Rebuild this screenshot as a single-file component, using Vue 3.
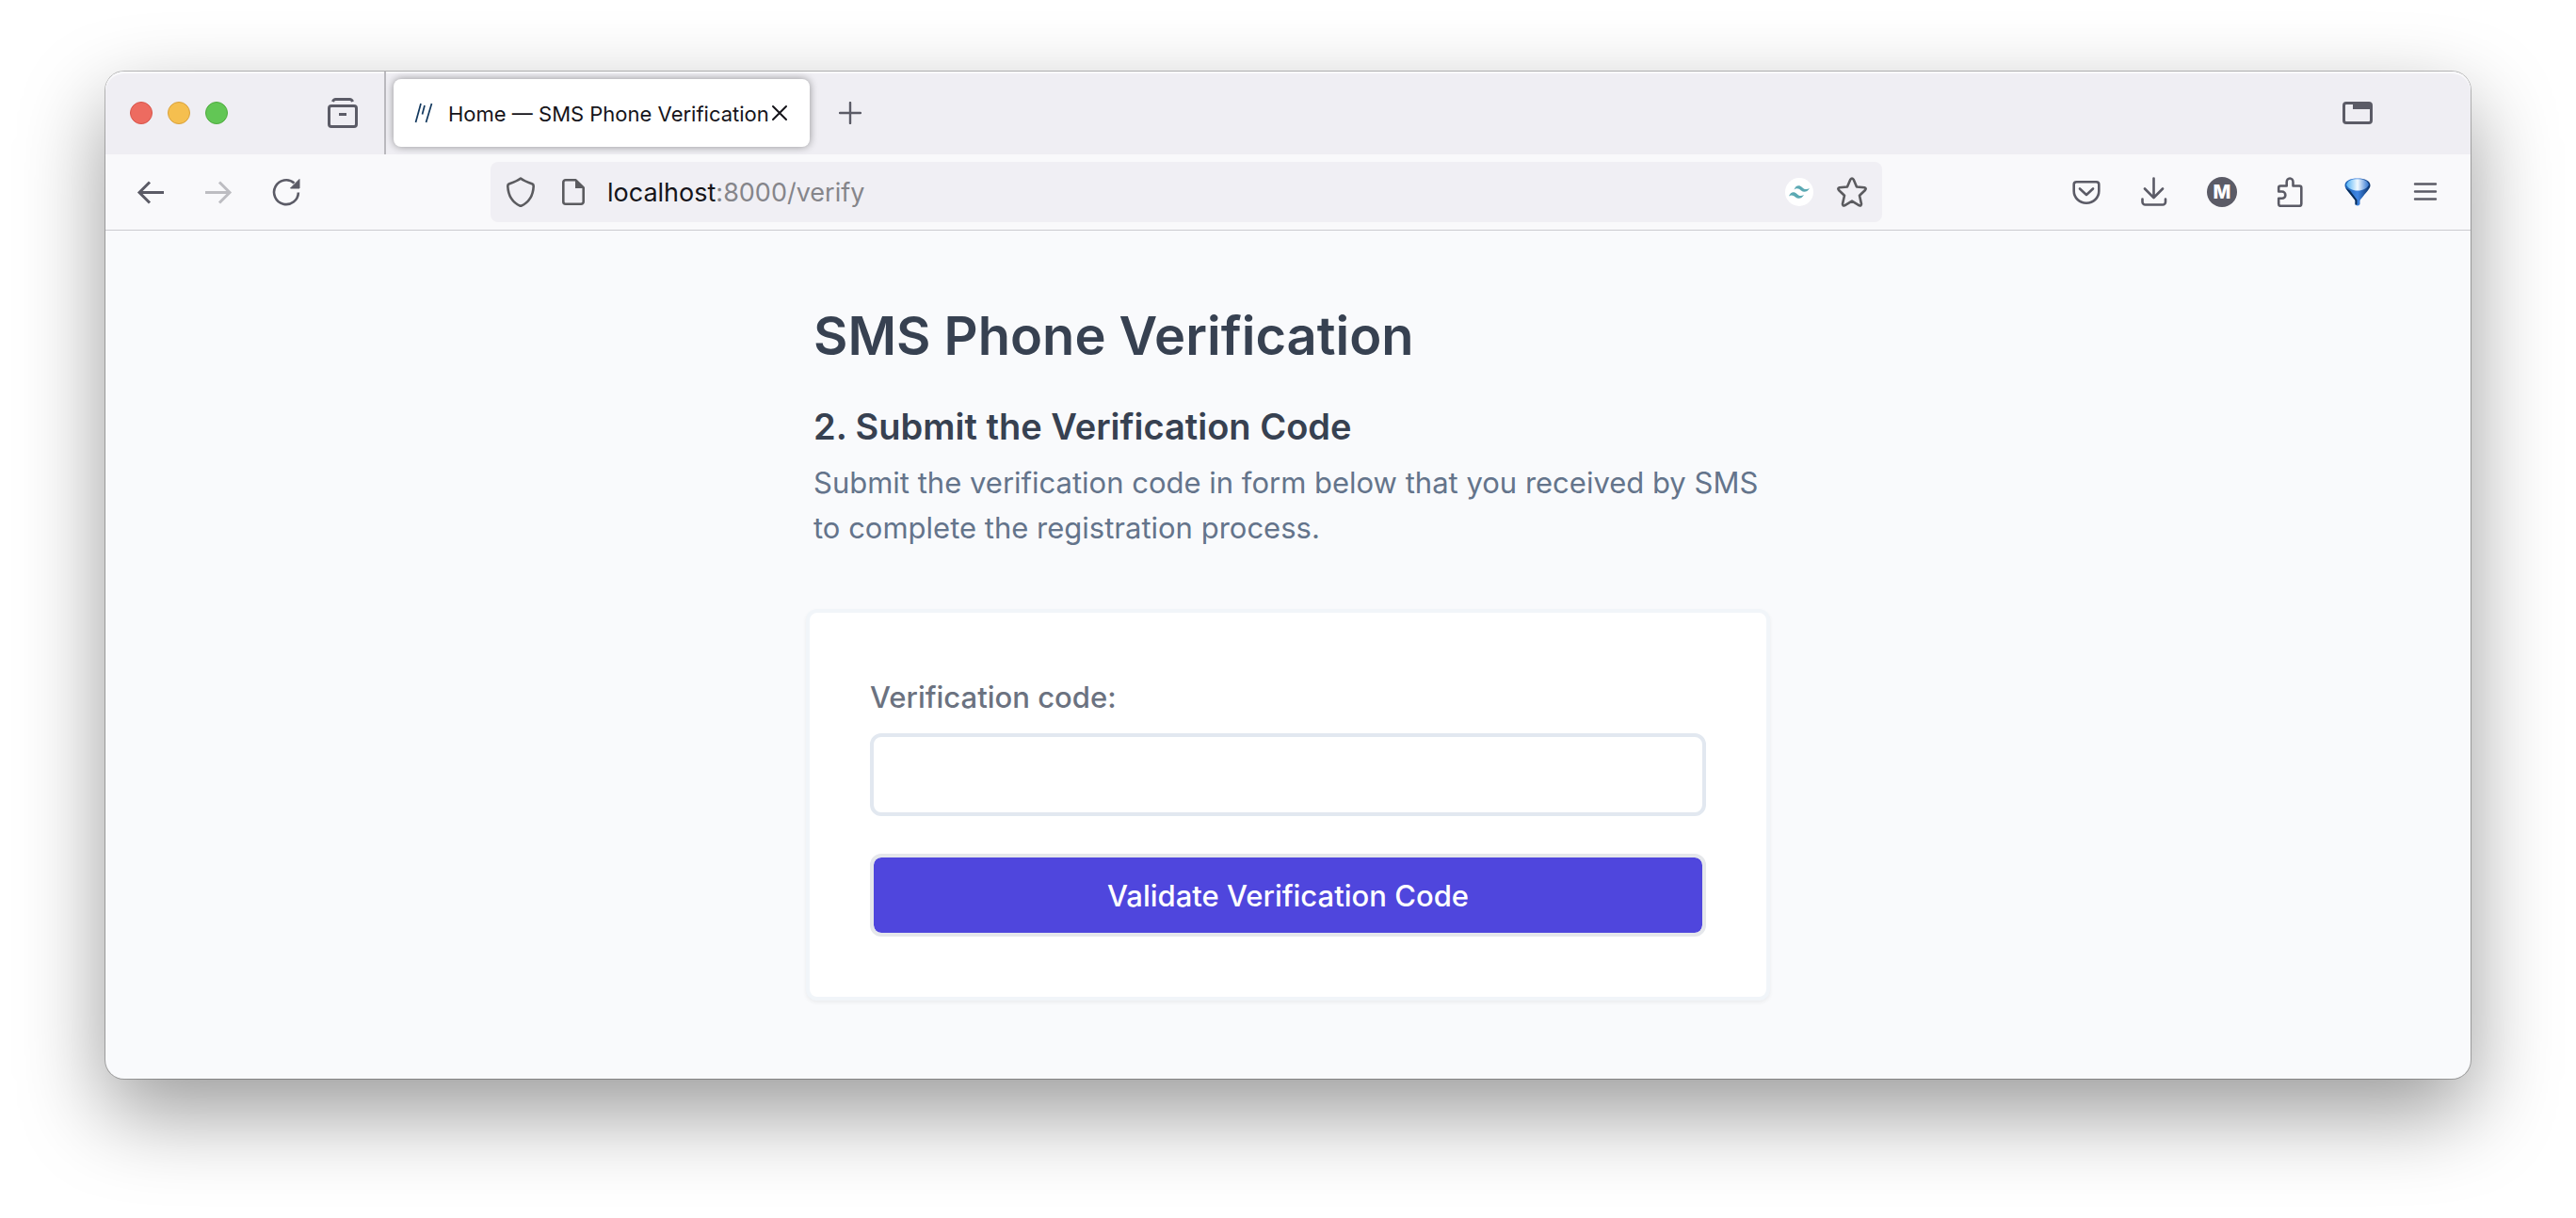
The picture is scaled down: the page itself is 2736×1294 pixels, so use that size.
<script setup>
import { ref } from 'vue'

const code = ref('')
const address = ref('localhost:8000/verify')
</script>

<template>
  <div class="desktop">
    <div class="window">
      <header class="tabbar">
        <div class="lights">
          <button class="light red" aria-label="Close window"></button>
          <button class="light yellow" aria-label="Minimise window"></button>
          <button class="light green" aria-label="Zoom window"></button>
        </div>
        <button class="icon-btn archive" aria-label="Firefox View">
          <svg width="32" height="32" viewBox="0 0 32 32" fill="none" stroke="#5b5b66" stroke-width="3">
            <path d="M5.500 4C6 2.500 7 1.500 8.500 1.500h15C25 1.500 26 2.500 26.500 4" />
            <rect x="1.500" y="8.500" width="29" height="22" rx="2.500" />
            <path d="M12 17.500h8" />
          </svg>
        </button>
        <div class="divider"></div>
        <div class="tab">
          <svg class="favicon" width="20" height="22" viewBox="0 0 20 22" fill="none" stroke="#12385e" stroke-width="1.700">
            <path d="M1.500 21L7 1M8.500 12.500L11 3M12.500 21L18.500 1" />
          </svg>
          <span class="tab-title">Home — SMS Phone Verification</span>
          <button class="icon-btn" aria-label="Close tab">
            <svg width="18" height="18" viewBox="0 0 18 18" fill="none" stroke="#15141a" stroke-width="2" stroke-linecap="round">
              <path d="M2 2l14 14M16 2L2 16" />
            </svg>
          </button>
        </div>
        <button class="icon-btn new-tab" aria-label="New tab">
          <svg width="24" height="24" viewBox="0 0 24 24" fill="none" stroke="#5b5b66" stroke-width="2.400" stroke-linecap="round">
            <path d="M12 1v22M1 12h22" />
          </svg>
        </button>
        <button class="icon-btn tab-list" aria-label="List all tabs">
          <svg width="32" height="24" viewBox="0 0 32 24" fill="none">
            <rect x="1.500" y="1.500" width="29" height="21" rx="2.500" stroke="#5b5b66" stroke-width="3" />
            <path d="M11 2h19v6H11z" fill="#5b5b66" />
          </svg>
        </button>
      </header>

      <nav class="toolbar">
        <button class="icon-btn tool" aria-label="Back">
          <svg width="32" height="32" viewBox="0 0 32 32" fill="none" stroke="#5b5b66" stroke-width="3">
            <path d="M30 16.500H4M15 5.500L4 16.500l11 11" />
          </svg>
        </button>
        <button class="icon-btn tool" aria-label="Forward" disabled>
          <svg width="32" height="32" viewBox="0 0 32 32" fill="none" stroke="#bdbdc2" stroke-width="3">
            <path d="M2 16.500h26M17 5.500l11 11-11 11" />
          </svg>
        </button>
        <button class="icon-btn tool" aria-label="Reload">
          <svg width="32" height="32" viewBox="0 0 32 32" fill="none">
            <path d="M28.900 16.500A12.900 12.900 0 1 1 24.500 6.500" stroke="#5b5b66" stroke-width="2.600" />
            <path d="M30 2.500v9.500H20.500z" fill="#5b5b66" stroke="#5b5b66" stroke-linejoin="round" />
          </svg>
        </button>

        <div class="urlbar">
          <svg width="32" height="32" viewBox="0 0 32 32" fill="none" stroke="#5b5b5f" stroke-width="2.600" stroke-linejoin="round">
            <path d="M16 1.500C12 4.500 7.500 6 3.500 7.500 2.500 8 2.200 8.700 2.300 10 2.800 20 8 27.500 16 31 24 27.500 29.200 20 29.700 10 29.800 8.700 29.500 8 28.500 7.500 24.500 6 20 4.500 16 1.500z" />
          </svg>
          <svg class="page-icon" width="24" height="28" viewBox="0 0 24 28" fill="none">
            <path d="M14.500 1.300H3.800A2.500 2.500 0 0 0 1.300 3.800v20.400a2.500 2.500 0 0 0 2.500 2.500h16.400a2.500 2.500 0 0 0 2.500-2.500V9.500z" stroke="#5b5b5f" stroke-width="2.600" stroke-linejoin="round" />
            <path d="M14 1v9h9z" fill="#5b5b5f" />
          </svg>
          <a class="address" href="#verify" :aria-label="address">localhost<span class="dim">:8000/verify</span></a>
          <span class="badge">
            <svg width="22" height="14" viewBox="0 0 22 14" fill="#5ba9b3">
              <path d="M5.500 4.500C7 0 11-1 14 2c2 2 4 3 8 1-2.500 4-6 5-9 2.500C10.500 3 8 2.500 5.500 4.500zM0 11.500C1.500 7 5.500 6 8.500 9c2 2 4 3 7.500 1-2.500 4-6 5-9 2.500C5 10.500 2.500 9.500 0 11.500z" />
            </svg>
          </span>
          <button class="icon-btn" aria-label="Bookmark this page">
            <svg width="32" height="32" viewBox="0 0 32 32" fill="none" stroke="#5b5b5f" stroke-width="2.600" stroke-linejoin="round">
              <path d="M14.300 2.700Q16 .3 17.700 2.700L21 10.500l8.300.8q2.300.6.700 2.700l-6 5.800 2 8.800q0 2.400-2.200 1.700L16 25.600 8.200 30.300Q6 31 6 28.600l2-8.800-6-5.800Q.4 11.900 2.700 11.300L11 10.500z" />
            </svg>
          </button>
        </div>

        <button class="icon-btn tool" aria-label="Save to Pocket">
          <svg width="32" height="32" viewBox="0 0 32 32" fill="none" stroke="#5b5b66" stroke-width="2.600" stroke-linecap="round" stroke-linejoin="round">
            <path d="M5.500 5.200h21a2.800 2.800 0 0 1 2.800 2.800v7a13.300 12.800 0 0 1-26.600 0V8a2.800 2.800 0 0 1 2.800-2.800z" />
            <path d="M9 12.500l7 6.500 7-6.500" />
          </svg>
        </button>
        <button class="icon-btn tool" aria-label="Downloads">
          <svg width="32" height="32" viewBox="0 0 32 32" fill="none" stroke="#5b5b66" stroke-width="2.600" stroke-linecap="round" stroke-linejoin="round">
            <path d="M15.500 1.500v20M6 12.500l9.500 9.500 9.500-9.500M3.500 23.500v3a3 3 0 0 0 3 3h18.500a3 3 0 0 0 3-3v-3" />
          </svg>
        </button>
        <button class="icon-btn tool" aria-label="Account">
          <span class="avatar">M</span>
        </button>
        <button class="icon-btn tool" aria-label="Extensions">
          <svg width="32" height="32" viewBox="0 0 32 32" fill="none" stroke="#5b5b66" stroke-width="2.600" stroke-linejoin="round">
            <path d="M4.200 15.500v-4a2 2 0 0 1 2-2h6.500V5.500a3.400 4 0 0 1 6.800 0v4h6.800a2 2 0 0 1 2 2v17.300a2 2 0 0 1-2 2H6.200a2 2 0 0 1-2-2v-6h3.500a3.600 3.600 0 0 0 0-7.300z" />
          </svg>
        </button>
        <button class="icon-btn tool" aria-label="Balloon extension">
          <svg width="32" height="32" viewBox="0 0 32 32">
            <defs>
              <linearGradient id="balloon" x1="0" y1="0" x2="1" y2="0">
                <stop offset="0" stop-color="#1c5fb0" />
                <stop offset=".5" stop-color="#3f86e4" />
                <stop offset="1" stop-color="#082f66" />
              </linearGradient>
              <linearGradient id="glow" x1="0" y1="0" x2="1" y2="0">
                <stop offset="0" stop-color="#4fb0f5" />
                <stop offset=".5" stop-color="#f2faff" />
                <stop offset="1" stop-color="#2f74d0" />
              </linearGradient>
            </defs>
            <path d="M2.500 9C2.500 4 8 1.500 16 1.500S29.500 4 29.500 9c0 3-4 7-7.500 11.500-2 2.500-3.500 3.500-3.500 5v3.500q-2.500 3-5 0v-3.500c0-1.500-1.500-2.500-3.500-5C6.500 16 2.500 12 2.500 9z" fill="url(#balloon)" />
            <path d="M4 8.500C5 4 9.500 2.200 16 2.200S27 4 28 8.500C26 12 22 14.500 16 14.500S6 12 4 8.500z" fill="url(#glow)" />
            <path d="M3 11.500L13.500 25v4.500h2V24.500L8 14.500z" fill="#0a2c57" />
          </svg>
        </button>
        <button class="icon-btn tool" aria-label="Open menu">
          <svg width="32" height="32" viewBox="0 0 32 32" fill="none" stroke="#5b5b66" stroke-width="2.400" stroke-linecap="round">
            <path d="M5 7.500h22M5 15.500h22M5 23.500h22" />
          </svg>
        </button>
      </nav>

      <main class="page">
        <div class="column">
          <div class="intro">
            <h1>SMS Phone Verification</h1>
            <h2>2. Submit the Verification Code</h2>
            <p>Submit the verification code in form below that you received by SMS to complete the registration process.</p>
          </div>
          <form class="card" @submit.prevent>
            <label for="code">Verification code:</label>
            <input id="code" v-model="code" type="text" />
            <button class="submit" type="submit">Validate Verification Code</button>
          </form>
        </div>
      </main>
    </div>
  </div>
</template>

<style>
body {
  margin: 0;
  background: #fff;
}
</style>

<style scoped>
* {
  box-sizing: border-box;
}

.desktop {
  padding: 76px 112px 148px;
  overflow: hidden;
  font-family: Inter, "Liberation Sans", sans-serif;
}

.window {
  border-radius: 20px;
  background: #f9fafc;
  box-shadow: 0 0 0 1px rgba(0, 0, 0, 0.25), 0 36px 90px rgba(0, 0, 0, 0.4);
}

.icon-btn {
  display: flex;
  flex: none;
  align-items: center;
  justify-content: center;
  padding: 0;
  border: 0;
  background: none;
}

.tabbar {
  display: flex;
  align-items: center;
  height: 88px;
  padding: 0 104px 0 26px;
  border-radius: 20px 20px 0 0;
  background: #efeef3;
  box-shadow: inset 0 2px 1px #fafafc;
}

.lights {
  display: flex;
  gap: 16px;
}

.light {
  width: 24px;
  height: 24px;
  padding: 0;
  border: 1px solid;
  border-radius: 50%;
}

.red {
  border-color: #d8544a;
  background: #ed6b60;
}

.yellow {
  border-color: #d9a13c;
  background: #f5bf4f;
}

.green {
  border-color: #4fab3f;
  background: #62c655;
}

.archive {
  margin: 0 28px 0 106px;
}

.divider {
  align-self: stretch;
  width: 2px;
  background: #bab9be;
}

.tab {
  display: flex;
  align-items: center;
  width: 442px;
  height: 72px;
  margin: 0 31px 0 8px;
  padding: 0 23px 0 22px;
  border-radius: 8px;
  background: #fff;
  box-shadow: 0 0 8px rgba(0, 0, 0, 0.4);
}

.favicon {
  flex: none;
}

.tab-title {
  flex: 1;
  margin-left: 16px;
  padding-top: 2px;
  color: #15141a;
  font-size: 22px;
  line-height: 32px;
  white-space: nowrap;
}

.tab-list {
  margin-left: auto;
}

.toolbar {
  display: flex;
  align-items: center;
  height: 81px;
  padding: 0 12px;
  border-bottom: 1px solid #cbcbd0;
  background: #f9f9fb;
}

.tool {
  width: 72px;
  height: 64px;
}

.urlbar {
  display: flex;
  flex: 1;
  align-items: center;
  height: 64px;
  margin: 0 181px;
  padding: 0 16px;
  border-radius: 8px;
  background: #f0eff4;
}

.page-icon {
  margin: 0 24px 0 28px;
}

.address {
  flex: 1;
  padding-top: 2px;
  color: #15141a;
  font-size: 27px;
  line-height: 32px;
  text-decoration: none;
}

.dim {
  color: #85858a;
}

.badge {
  display: flex;
  align-items: center;
  justify-content: center;
  width: 30px;
  height: 30px;
  margin-right: 25px;
  border-radius: 50%;
  background: #fff;
}

.avatar {
  width: 32px;
  height: 32px;
  border-radius: 50%;
  background: #5b5b66;
  color: #fff;
  font: 800 20px/32px Inter, "Liberation Sans", sans-serif;
}

.page {
  padding: 76px 24px 83px;
}

.column {
  max-width: 1024px;
  margin: 0 auto;
}

.intro {
  padding: 0 8px;
}

h1,
h2,
p {
  margin: 0;
}

h1 {
  color: #374151;
  font-size: 56px;
  font-weight: 600;
  line-height: 72px;
}

h2 {
  margin: 36px 0 12px;
  color: #374151;
  font-size: 38px;
  font-weight: 600;
  line-height: 48px;
}

p {
  color: #64748b;
  font-size: 31px;
  line-height: 48px;
}

.card {
  margin-top: 62px;
  padding: 64px;
  border: 4px solid #f1f5f9;
  border-radius: 12px;
  background: #fff;
  box-shadow: 0 2px 4px rgba(0, 0, 0, 0.06);
}

label {
  display: block;
  padding-top: 2px;
  color: #6b7280;
  font-size: 31px;
  font-weight: 500;
  line-height: 48px;
}

input,
.submit {
  display: block;
  width: 100%;
  height: 88px;
  border-radius: 12px;
  font: 500 31px/48px Inter, "Liberation Sans", sans-serif;
}

input {
  margin: 14px 0 40px;
  padding: 0 24px;
  border: 4px solid #e2e8f0;
  background: #fff;
}

.submit {
  padding: 2px 0 0;
  border: 4px solid #e5e7eb;
  background: #4f46dd;
  background-clip: padding-box;
  color: #fff;
}
</style>
